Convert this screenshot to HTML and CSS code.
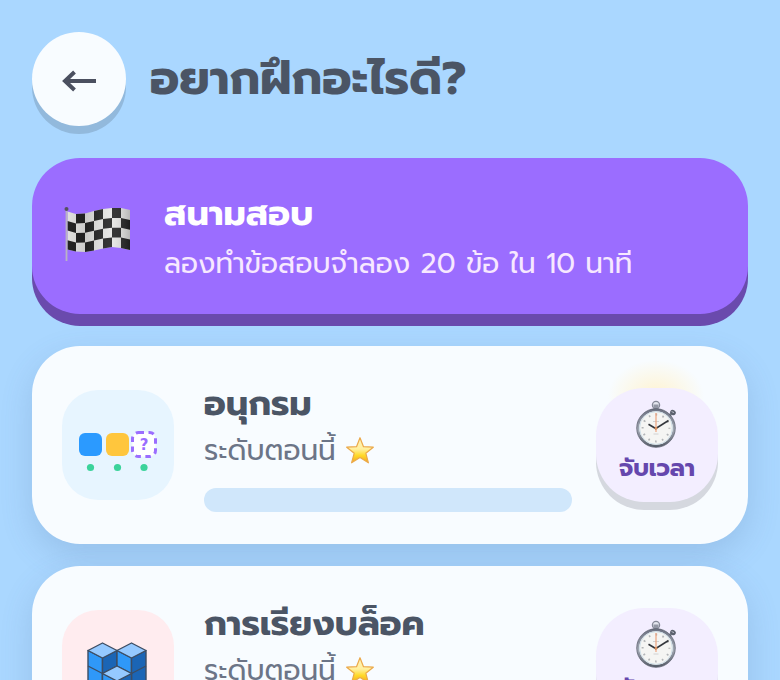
FILE: index.html
```html
<!DOCTYPE html>
<html lang="th">

<head>
    <meta charset="UTF-8">
    <meta name="viewport" content="width=device-width, initial-scale=1.0">
    <title>อยากฝึกอะไรดี?</title>
    <link rel="stylesheet" href="styles.css">
</head>

<body>
    <!-- shared icons -->
    <svg class="symbols" aria-hidden="true">
        <defs>
            <linearGradient id="starFill" x1="0" y1="0" x2="0" y2="1">
                <stop offset="0" stop-color="#fff3b8" />
                <stop offset="0.45" stop-color="#fff0a0" />
                <stop offset="0.7" stop-color="#ffda2a" />
                <stop offset="1" stop-color="#f2a51d" />
            </linearGradient>
            <linearGradient id="rim" x1="0" y1="0" x2="0" y2="1">
                <stop offset="0" stop-color="#6f7484" />
                <stop offset="0.55" stop-color="#a3a9b5" />
                <stop offset="1" stop-color="#59606c" />
            </linearGradient>
            <linearGradient id="flagShade" x1="0" y1="0" x2="1" y2="0">
                <stop offset="0" stop-color="#000" stop-opacity="0.02" />
                <stop offset="0.3" stop-color="#000" stop-opacity="0.12" />
                <stop offset="0.7" stop-color="#fff" stop-opacity="0.08" />
                <stop offset="1" stop-color="#000" stop-opacity="0.2" />
            </linearGradient>
        </defs>
        <symbol id="star" viewBox="0 0 28 28">
            <path d="M14 0.7 17.5 9.7 27.3 10.2 19.8 16.2 22.4 25.8 14 20.5 5.600 25.8 8.200 16.2 0.7 10.2 10.5 9.7Z" fill="url(#starFill)" stroke="#eba94b" stroke-width="1.2" stroke-linejoin="round" />
        </symbol>
        <symbol id="stopwatch" viewBox="0 0 44 48">
            <circle cx="21" cy="5" r="3.6" fill="#e4e6ee" stroke="#858998" stroke-width="1.3" />
            <path d="M18.5 4.5h5v5h-5z" fill="#9397a5" />
            <path d="M34 16l3-3" stroke="#777b88" stroke-width="2.5" />
            <ellipse cx="38" cy="12.5" rx="3" ry="2.4" fill="#5b606d" transform="rotate(38 38 12.5)" />
            <path d="M36.6 11.6l2.4 1" stroke="#b9bdc9" />
            <circle cx="21" cy="28" r="18" fill="#f5f5f3" stroke="url(#rim)" stroke-width="2.4" />
            <circle cx="21" cy="28" r="19.3" fill="none" stroke="#4d535f" stroke-width="0.7" />
            <circle cx="21" cy="28" r="16.4" fill="none" stroke="#cfdfe8" />
            <circle cx="21" cy="28" r="13.4" fill="none" stroke="#b3b5b8" stroke-width="2" stroke-dasharray="1.6 5.416" stroke-dashoffset="0.8" />
            <path d="M18 21.5h6M18.500 34h5" stroke="#d2d2d2" />
            <path d="M21 28.700 13.500 24.300" stroke="#34363c" stroke-width="1.7" />
            <path d="M20 29 33.500 20.500" stroke="#34363c" stroke-width="1.5" />
            <path d="M21 13V32" stroke="#efa27c" stroke-width="1.2" />
            <circle cx="21" cy="28.300" r="1.400" fill="#d9905f" />
        </symbol>
    </svg>

    <header class="header">
        <button class="back-btn" type="button" aria-label="กลับ">
            <svg viewBox="0 0 36 28" aria-hidden="true">
                <path d="M35 16H5M13.500 7 4 16 13.500 25" />
            </svg>
        </button>
        <h1>อยากฝึกอะไรดี?</h1>
    </header>

    <main class="menu">
        <button class="exam-card" type="button">
            <svg class="flag" viewBox="0 0 68 62" aria-hidden="true">
                <path d="M3.500 6.500 12 9 21 8.500 30 6 39 4 48 3 57 3 66 5V45L57 43 48 42 39 43.500 30 45.500 21 47 12 46.500 3.500 44.500Z" fill="#e6e6e4" />
                <g fill="#252525">
                    <path d="M12 9 21 8.500v9.500l-9 .500zM30 6 39 4v10l-9 2zM48 3h9v10h-9z" />
                    <path d="M3.500 16 12 18.500V28l-8.500-2.500zM21 18l9-2v9.800l-9 2zM39 14l9-1v9.700l-9 1zM57 13l9 2v9.800l-9-2z" />
                    <path d="M12 28l9-.300V37.500l-9 .300zM30 25.800l9-2v9.800l-9 2zM48 22.800h9v9.800h-9z" />
                    <path d="M3.500 35.300 12 37.600v8.900l-8.500-2zM21 37.500l9-2v10l-9 1.500zM39 33.600l9-1V42l-9 1.500zM57 32.600l9 2V45l-9-2z" />
                </g>
                <path d="M3.500 6.500 12 9 21 8.500 30 6 39 4 48 3 57 3 66 5V45L57 43 48 42 39 43.500 30 45.500 21 47 12 46.500 3.500 44.500Z" fill="url(#flagShade)" />
                <path d="M2.500 5V56" stroke="#b9b3c4" stroke-width="1.800" />
                <circle cx="2.500" cy="4" r="2" fill="#55515e" />
            </svg>
            <span class="exam-text">
                <span class="exam-title">สนามสอบ</span>
                <span class="exam-info">ลองทำข้อสอบจำลอง 20 ข้อ ใน 10 นาที</span>
            </span>
        </button>

        <article class="card">
            <div class="tile tile-blue">
                <svg viewBox="0 0 80 80" aria-hidden="true">
                    <rect x="1" y="28" width="23" height="23" rx="6" fill="#2b9aff" />
                    <rect x="28" y="28" width="23" height="23" rx="6" fill="#ffc63d" />
                    <rect x="54.500" y="27.500" width="23" height="24" rx="6" fill="#fff" stroke="#9b6dff" stroke-width="3" stroke-dasharray="5.500 4.500" />
                    <text x="66" y="45" class="mystery">?</text>
                    <g fill="#3bd39b">
                        <circle cx="12.500" cy="62.500" r="3.600" />
                        <circle cx="39.500" cy="62.500" r="3.600" />
                        <circle cx="66" cy="62.500" r="3.600" />
                    </g>
                </svg>
            </div>
            <div class="card-body">
                <h2 class="card-title">อนุกรม</h2>
                <p class="level">ระดับตอนนี้ <svg class="star" aria-label="1 ดาว"><use href="#star" /></svg></p>
                <div class="progress"></div>
            </div>
            <div class="timer-wrap glow">
                <button class="timer-btn" type="button">
                    <svg class="watch" aria-hidden="true"><use href="#stopwatch" /></svg>
                    จับเวลา
                </button>
            </div>
        </article>

        <article class="card">
            <div class="tile tile-pink">
                <svg viewBox="0 0 80 80" aria-hidden="true">
                    <g stroke="#3d4d63" stroke-width="1.400" stroke-linejoin="round">
                        <path d="M10 25.500 24.500 33V63L10 55.500Z" fill="#2f98f8" />
                        <path d="M24.500 33 39 25.500V55.500L24.500 63Z" fill="#1b65b5" />
                        <path d="M39 25.500 53.500 33V63L39 55.500Z" fill="#2f98f8" />
                        <path d="M53.500 33 68 25.500V55.500L53.500 63Z" fill="#1b65b5" />
                        <path d="M10 25.500 24.500 18 39 25.500 24.500 33Z" fill="#95c9ff" />
                        <path d="M39 25.500 53.500 18 68 25.500 53.500 33Z" fill="#95c9ff" />
                        <path d="M10 41 24.500 48.500 39 41 53.500 48.500 68 41" fill="none" />
                        <path d="M24.500 48.500 39 56V71.500L24.500 63Z" fill="#2f98f8" />
                        <path d="M39 56 53.500 48.500V63L39 71.500Z" fill="#1b65b5" />
                        <path d="M24.500 48.500 39 41 53.500 48.500 39 56Z" fill="#95c9ff" />
                    </g>
                </svg>
            </div>
            <div class="card-body">
                <h2 class="card-title">การเรียงบล็อค</h2>
                <p class="level">ระดับตอนนี้ <svg class="star" aria-label="1 ดาว"><use href="#star" /></svg></p>
                <div class="progress"></div>
            </div>
            <div class="timer-wrap">
                <button class="timer-btn" type="button">
                    <svg class="watch" aria-hidden="true"><use href="#stopwatch" /></svg>
                    จับเวลา
                </button>
            </div>
        </article>
    </main>
</body>

</html>
```
FILE: styles.css
```css
* {
    box-sizing: border-box;
    margin: 0;
    padding: 0;
}

body {
    min-height: 100vh;
    padding: 32px;
    background: #aad7ff;
    color: #4b5565;
    font-family: Prompt, Kanit, "Noto Sans Thai", "Noto Sans", sans-serif;
}

button {
    border: none;
    font-family: inherit;
    cursor: pointer;
}

.symbols {
    display: block;
    width: 0;
    height: 0;
}

.header {
    display: flex;
    align-items: center;
    gap: 24px;
    margin-bottom: 32px;
}

.header h1 {
    font-size: 47px;
    font-weight: 700;
    line-height: 64px;
}

.back-btn {
    display: flex;
    align-items: center;
    justify-content: center;
    width: 94px;
    height: 94px;
    border-radius: 50%;
    background: #f8fcff;
    box-shadow: 0 8px 0 #92b9dc;
}

.back-btn svg {
    width: 36px;
    height: 28px;
    fill: none;
    stroke: #4b5060;
    stroke-width: 4;
}

.menu {
    display: flex;
    flex-direction: column;
    gap: 22px;
}

.exam-card {
    display: flex;
    align-items: center;
    gap: 32px;
    margin-bottom: 10px;
    padding: 32px;
    border-radius: 48px;
    background: #9b6dff;
    box-shadow: 0 12px 0 #6a4aad;
    color: #fff;
    text-align: left;
}

.flag {
    flex: none;
    width: 68px;
    height: 62px;
}

.exam-text {
    display: flex;
    flex-direction: column;
    gap: 8px;
}

.exam-title {
    font-size: 35px;
    font-weight: 700;
    line-height: 48px;
}

.exam-info {
    color: #f7e8ff;
    font-size: 28px;
    font-weight: 400;
    line-height: 36px;
}

.card {
    display: flex;
    align-items: center;
    padding: 32px 30px;
    border-radius: 48px;
    background: #f8fcff;
    box-shadow: 0 12px 32px rgba(74, 104, 150, 0.2);
}

.tile {
    display: flex;
    flex: none;
    align-items: center;
    justify-content: center;
    width: 112px;
    height: 110px;
    margin-right: 30px;
    border-radius: 36px;
}

.tile svg {
    width: 80px;
    height: 80px;
}

.tile-blue {
    background: #e7f5ff;
}

.tile-pink {
    background: #ffecef;
}

.mystery {
    fill: #9b6dff;
    font-family: "DejaVu Sans", sans-serif;
    font-size: 15px;
    font-weight: 700;
    text-anchor: middle;
}

.card-body {
    flex: 1;
    min-width: 0;
}

.card-title {
    font-size: 35px;
    font-weight: 700;
    line-height: 52px;
}

.level {
    display: flex;
    align-items: center;
    gap: 10px;
    margin-bottom: 16px;
    color: #6c7587;
    font-size: 28px;
    font-weight: 400;
    line-height: 42px;
}

.star {
    width: 28px;
    height: 28px;
}

.progress {
    height: 24px;
    border-radius: 12px;
    background: #d0e7fb;
}

.timer-wrap {
    position: relative;
    margin-left: 24px;
}

/* soft light behind the first timer */
.glow::before {
    content: "";
    position: absolute;
    top: -28px;
    left: 12px;
    width: 96px;
    height: 72px;
    background: radial-gradient(closest-side, #fff3d0, rgba(255, 247, 220, 0));
}

.timer-btn {
    position: relative;
    display: flex;
    flex-direction: column;
    align-items: center;
    gap: 4px;
    width: 122px;
    padding: 12px 8px 18px;
    border-radius: 48px;
    background: #f3eeff;
    box-shadow: 0 8px 0 #d5d8df;
    color: #6547ad;
    font-size: 24px;
    font-weight: 700;
    line-height: 32px;
}

.watch {
    width: 44px;
    height: 48px;
}
```
